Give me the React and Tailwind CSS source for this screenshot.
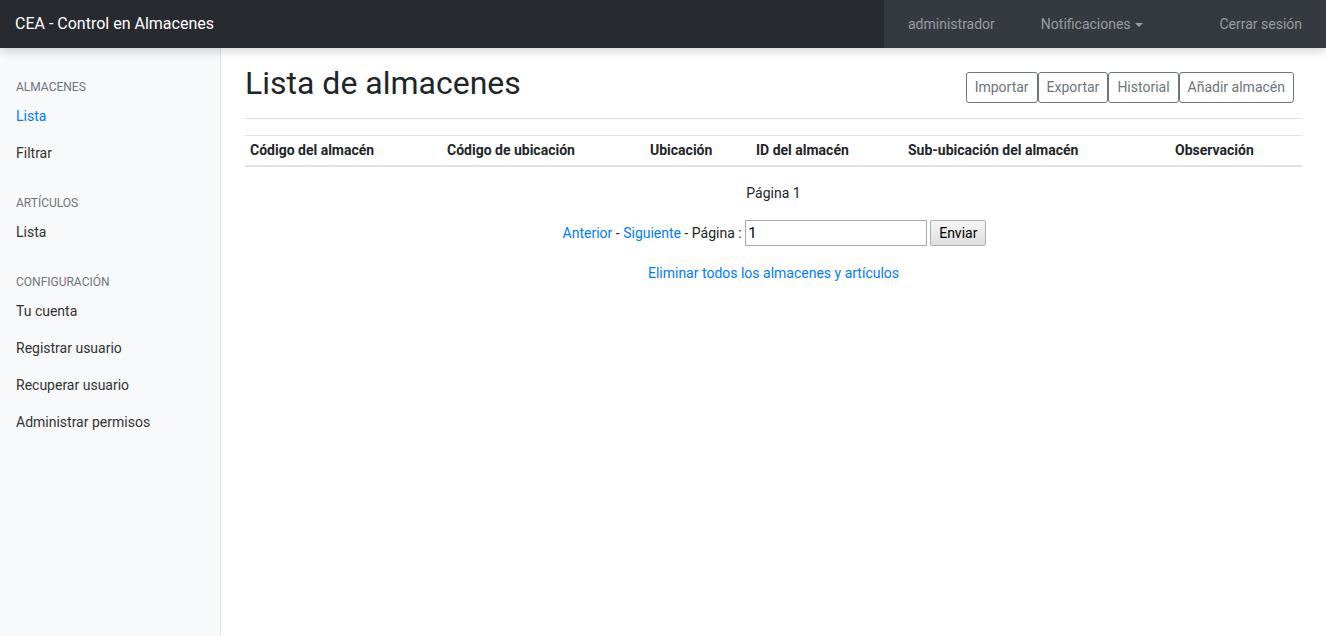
const sections = [
  { title: 'Almacenes', links: [{ label: 'Lista', active: true }, { label: 'Filtrar' }] },
  { title: 'Artículos', links: [{ label: 'Lista' }] },
  {
    title: 'Configuración',
    links: [
      { label: 'Tu cuenta' },
      { label: 'Registrar usuario' },
      { label: 'Recuperar usuario' },
      { label: 'Administrar permisos' }
    ]
  }
];

const columns = [
  { label: 'Código del almacén', w: 'w-[197px]' },
  { label: 'Código de ubicación', w: 'w-[203px]' },
  { label: 'Ubicación', w: 'w-[106px]' },
  { label: 'ID del almacén', w: 'w-[152px]' },
  { label: 'Sub-ubicación del almacén', w: 'w-[267px]' },
  { label: 'Observación', w: '' }
];

const actions = ['Importar', 'Exportar', 'Historial', 'Añadir almacén'];

const App = () => {
  return (
    <div className="flex flex-col h-[636px] bg-white text-[#212529] font-['Roboto','Liberation_Sans',sans-serif] text-sm leading-[21px]">
      {/* Barra superior */}
      <header className="relative z-10 flex h-12 shrink-0 bg-[#343a40] shadow-[0_3px_10px_rgba(0,0,0,0.18)]">
        <div className="flex items-center w-[884px] bg-[#272b30] pl-[15px] text-white text-base">
          CEA - Control en Almacenes
        </div>
        <nav className="flex flex-1 items-center pl-6 pr-6 text-[#9a9da0]">
          <span>administrador</span>
          <span className="ml-[46px] flex items-center">
            Notificaciones
            <span className="ml-[4px] mt-[1px] w-0 h-0 border-x-[4px] border-x-transparent border-t-[4px] border-t-[#9a9da0]" />
          </span>
          <span className="ml-auto">Cerrar sesión</span>
        </nav>
      </header>

      <div className="flex flex-1 min-h-0">
        {/* Menú lateral */}
        <aside className="w-[221px] shrink-0 bg-[#f8f9fa] border-r border-[#dfe0e1] pt-2">
          {sections.map((section) => (
            <div key={section.title}>
              <h6 className="mt-[22px] mb-[2px] px-4 text-xs leading-[18px] uppercase text-[#6c757d]">
                {section.title}
              </h6>
              <ul>
                {section.links.map((link) => (
                  <li key={link.label}>
                    <a
                      href="#"
                      className={`block px-4 py-2 font-normal ${
                        link.active ? 'text-[#007bff]' : 'text-[#333]'
                      }`}
                    >
                      {link.label}
                    </a>
                  </li>
                ))}
              </ul>
            </div>
          ))}
        </aside>

        {/* Contenido principal */}
        <main className="flex-1 px-6 pt-4">
          <div className="flex items-center justify-between pb-2 mb-4 border-b border-[#dee2e6]">
            <h1 className="mb-2 text-[32px] leading-[38px] font-normal">Lista de almacenes</h1>
            <div className="flex mr-2">
              {actions.map((label) => (
                <button
                  key={label}
                  className="px-2 py-1 text-sm leading-[21px] text-[#6c757d] border border-[#6c757d] rounded-[3px] bg-white"
                >
                  {label}
                </button>
              ))}
            </div>
          </div>

          <table className="w-full border-collapse text-left">
            <thead>
              <tr className="border-t border-[#dee2e6] border-b-2">
                {columns.map((col) => (
                  <th key={col.label} className={`${col.w} px-[5px] py-[4px] font-bold`}>
                    {col.label}
                  </th>
                ))}
              </tr>
            </thead>
            <tbody />
          </table>

          <p className="mt-[16px] text-center">Página 1</p>

          <div className="mt-[16px] pl-[2px] flex items-center justify-center whitespace-pre">
            <a href="#" className="text-[#007bff]">Anterior</a>
            <span> - </span>
            <a href="#" className="text-[#007bff]">Siguiente</a>
            <span> - Página : </span>
            <input
              type="text"
              defaultValue="1"
              className="w-[182px] h-[26px] px-[2px] border border-[#a9a9a9] text-[15px] text-black outline-none"
            />
            <button className="ml-[3px] h-[26px] px-[8px] text-sm text-black border border-[#adadad] rounded-[2px] bg-gradient-to-b from-[#f6f6f6] to-[#dedede]">
              Enviar
            </button>
          </div>

          <p className="mt-[17px] text-center">
            <a href="#" className="text-[#007bff]">Eliminar todos los almacenes y artículos</a>
          </p>
        </main>
      </div>
    </div>
  );
};

export default App;
